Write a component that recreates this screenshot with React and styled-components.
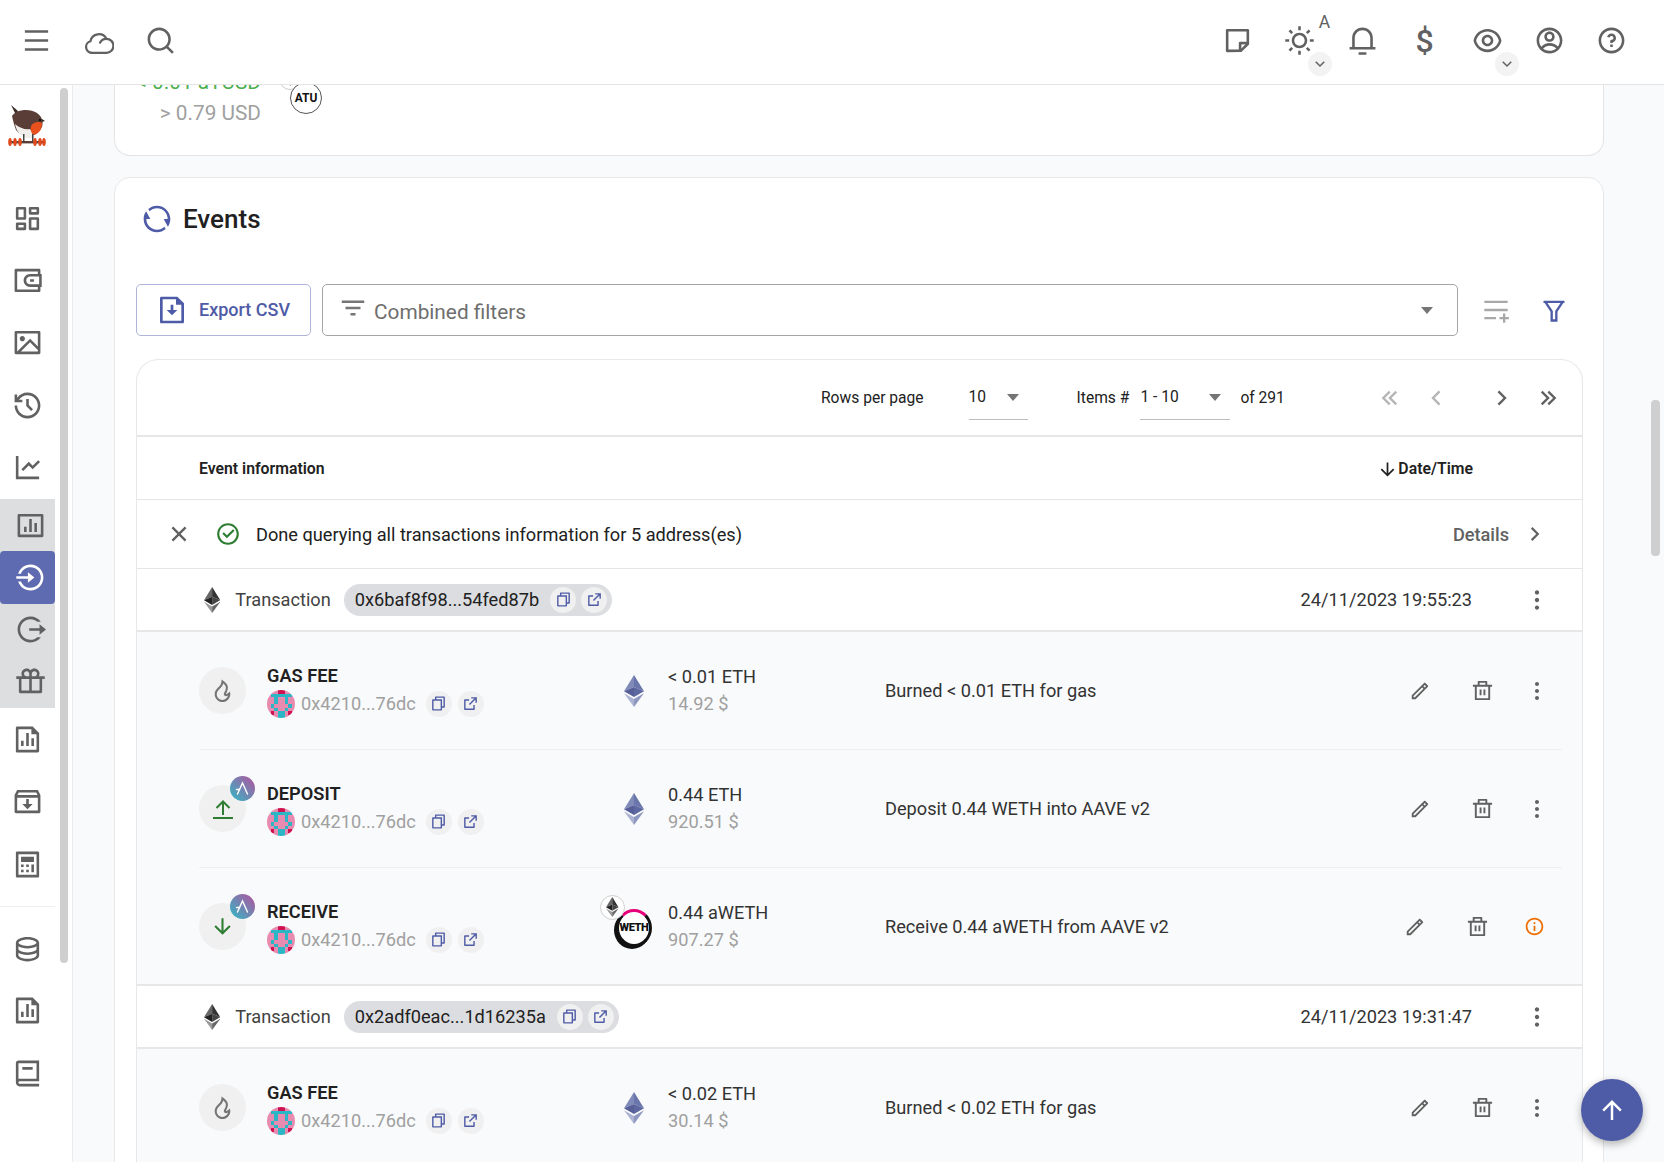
import React from "react";
import styled, { createGlobalStyle } from "styled-components";
import {
  RiMenuLine, RiSearchLine, RiStickyNoteLine, RiSunLine, RiNotification3Line, RiEyeLine,
  RiAccountCircleLine, RiQuestionLine, RiArrowDownSLine, RiDashboardLine, RiWallet3Line, RiImageLine,
  RiHistoryLine, RiLineChartLine, RiBarChartBoxLine, RiLoginCircleLine, RiLogoutCircleRLine, RiGiftLine,
  RiFileChartLine, RiInboxArchiveLine, RiCalculatorLine, RiDatabase2Line, RiBook2Line, RiRefreshLine,
  RiFileDownloadLine, RiFilter3Line, RiPlayListAddLine, RiFilterLine, RiArrowLeftDoubleLine,
  RiArrowRightDoubleLine, RiArrowLeftSLine, RiArrowRightSLine, RiArrowDownLine, RiArrowUpLine, RiCloseLine,
  RiCheckboxCircleLine, RiFileCopyLine, RiExternalLinkLine, RiFireLine, RiPencilLine, RiDeleteBinLine,
  RiMore2Fill, RiInformationLine,
} from "react-icons/ri";

const PRIMARY = "#4e5ba6";
const ICON = "#616161";

const GlobalStyle = createGlobalStyle`
  html, body { margin: 0; height: 100%; overflow: hidden; background: #fff; }
  body { font-family: Roboto, "Liberation Sans", sans-serif; color: #212121; }
  * { box-sizing: border-box; }
`;

const Page = styled.div`
  display: flex;
  flex-direction: column;
  height: 100vh;
`;

const TopBar = styled.header`
  position: relative;
  z-index: 2;
  flex: 0 0 85px;
  display: flex;
  align-items: center;
  justify-content: space-between;
  padding: 0 21px 2px 5px;
  background: #fff;
  border-bottom: 1px solid #e4e4e4;
`;

const BarGroup = styled.div`
  display: flex;
  align-items: center;
`;

const BarButton = styled.div`
  position: relative;
  width: 62.4px;
  height: 62.4px;
  display: flex;
  align-items: center;
  justify-content: center;
  color: ${ICON};
  font-size: 31px;
`;

const Currency = styled.span`
  font-size: 32px;
  font-weight: 500;
  color: ${ICON};
`;

const AutoMark = styled.span`
  position: absolute;
  top: 2px;
  left: 50px;
  font-size: 17.5px;
  color: ${ICON};
`;

const MenuChevron = styled.span`
  position: absolute;
  top: 42px;
  left: 39px;
  width: 24px;
  height: 24px;
  border-radius: 50%;
  background: #f3f3f3;
  display: flex;
  align-items: center;
  justify-content: center;
  font-size: 18px;
`;

const Body = styled.div`
  flex: 1;
  display: flex;
  min-height: 0;
`;

const Sidebar = styled.aside`
  position: relative;
  flex: 0 0 73px;
  padding-right: 17px;
  border-right: 1px solid #ececec;
  background: #fff;
`;

const SideScroll = styled.span`
  position: absolute;
  top: 3px;
  left: 60px;
  width: 8px;
  height: 875px;
  border-radius: 4px;
  background: #cfcfcf;
`;

const LogoBox = styled.div`
  height: 102px;
  padding: 19px 0 0 8px;
`;

const NavItem = styled.div`
  height: ${p => (p.$sub ? "52.3px" : "62.4px")};
  display: flex;
  align-items: center;
  justify-content: center;
  padding-left: ${p => (p.$sub ? "6px" : "0")};
  font-size: 31px;
  color: ${p => (p.$active ? "#fff" : ICON)};
  background: ${p => (p.$active ? "#5f6bb0" : "transparent")};
  border-radius: ${p => (p.$active ? "4px" : "0")};
`;

const NavGroup = styled.div`
  background: #dddee0;
`;

const NavDivider = styled.div`
  height: 1px;
  margin: 11px 0 10px;
  background: #eeeeee;
`;

const Main = styled.main`
  position: relative;
  flex: 1;
  min-width: 0;
  overflow: hidden;
  padding: 0 60px 0 41px;
  background: #f9fafb;
`;

const PageScroll = styled.span`
  position: absolute;
  top: 315px;
  right: 4px;
  width: 9px;
  height: 156px;
  border-radius: 4px;
  background: #cfcfcf;
`;

const BalanceCard = styled.section`
  display: flow-root;
  height: 71px;
  padding-left: 21px;
  background: #fff;
  border: 1px solid #e4e4e4;
  border-top: 0;
  border-radius: 0 0 16px 16px;
`;

const BalanceCell = styled.div`
  position: relative;
  width: 125px;
  margin-top: -18px;
  text-align: right;
  font-size: 20.8px;
  line-height: 30.5px;
`;

const Gain = styled.div`
  color: #4caf50;
`;

const Muted = styled.div`
  color: #a0a0a0;
`;

const AtuBadge = styled.span`
  position: absolute;
  top: 15px;
  left: 154px;
  width: 32px;
  height: 32px;
  border: 1px solid #555;
  border-radius: 50%;
  background: #fff;
  color: #111;
  font-size: 12px;
  font-weight: 700;
  line-height: 30px;
  text-align: center;
`;

const BehindBadge = styled.span`
  position: absolute;
  top: 1px;
  left: 143px;
  width: 22px;
  height: 22px;
  border: 1px solid #ccc;
  border-radius: 50%;
  background: #fff;
  display: flex;
  align-items: center;
  justify-content: center;
`;

const EventsCard = styled.section`
  margin-top: 21px;
  padding: 0 20px 0 21px;
  height: 1200px;
  background: #fff;
  border: 1px solid #e8e8e8;
  border-radius: 16px 16px 0 0;
`;

const TitleRow = styled.div`
  height: 84px;
  display: flex;
  align-items: center;
  gap: 10px;
  padding: 0 0 2px 5px;
  font-size: 26px;
  font-weight: 500;
  color: #212121;
  svg { color: ${PRIMARY}; font-size: 32px; }
`;

const FilterRow = styled.div`
  margin-top: 22px;
  display: flex;
  align-items: center;
  gap: 11px;
`;

const ExportButton = styled.div`
  flex: 0 0 175px;
  height: 52px;
  display: flex;
  align-items: center;
  padding: 0 0 1px 19px;
  gap: 11px;
  border: 1px solid #aeb5d8;
  border-radius: 5px;
  color: ${PRIMARY};
  font-size: 18px;
  font-weight: 500;
  svg { font-size: 32px; }
`;

const FilterSelect = styled.div`
  flex: 0 0 1136px;
  height: 52px;
  display: flex;
  align-items: center;
  padding: 0 24px 0 15px;
  gap: 6px;
  border: 1px solid #a5a5a5;
  border-radius: 5px;
  color: #6e6e6e;
  font-size: 20.8px;
  svg { font-size: 30px; color: #757575; margin-top: -4px; }
`;

const FilterLabel = styled.span`
  padding-top: 3px;
`;

const Caret = styled.span`
  display: block;
  width: 0;
  height: 0;
  margin-left: ${p => (p.$push ? "auto" : "0")};
  border-left: 6.5px solid transparent;
  border-right: 6.5px solid transparent;
  border-top: 7px solid #757575;
`;

const FilterTools = styled.div`
  display: flex;
  align-items: center;
  gap: 30px;
  padding-left: 13px;
  font-size: 28px;
  color: #a8a8a8;
  svg:last-child { color: ${PRIMARY}; }
`;

const TableCard = styled.div`
  margin-top: 23px;
  border: 1px solid #e8e8e8;
  border-bottom: 0;
  border-radius: 22px 22px 0 0;
  overflow: hidden;
`;

const Pagination = styled.div`
  height: 77px;
  display: flex;
  align-items: center;
  padding-left: 684px;
  font-size: 15.6px;
  white-space: nowrap;
  color: #212121;
  border-bottom: 2px solid #e6e6e6;
`;

const PageSelect = styled.div`
  flex: 0 0 ${p => p.$width}px;
  height: 44px;
  margin: ${p => p.$margin};
  padding-right: 9px;
  display: flex;
  align-items: center;
  justify-content: space-between;
  border-bottom: 1px solid #bdbdbd;
`;

const Pagers = styled.div`
  display: flex;
  align-items: center;
  margin-left: 82px;
  font-size: 28px;
  svg { display: block; }
`;

const Pager = styled.span`
  flex: 0 0 46px;
  margin-left: ${p => p.$gap || 0}px;
  display: flex;
  justify-content: center;
  color: ${p => (p.$off ? "#b5b5b5" : "#616161")};
`;

const HeadRow = styled.div`
  height: 63px;
  display: flex;
  align-items: center;
  justify-content: space-between;
  padding: 0 109px 0 62px;
  font-size: 15.8px;
  font-weight: 600;
  border-bottom: 1px solid #e6e6e6;
`;

const SortLabel = styled.div`
  display: flex;
  align-items: center;
  svg { font-size: 21px; margin-top: 2px; }
`;

const StatusRow = styled.div`
  height: 69px;
  display: flex;
  align-items: center;
  padding: 0 34px 0 28px;
  font-size: 18.2px;
  border-bottom: 1px solid #e6e6e6;
`;

const CloseIcon = styled(RiCloseLine)`
  font-size: 28px;
  color: ${ICON};
`;

const CheckIcon = styled(RiCheckboxCircleLine)`
  margin: 0 15px 0 22px;
  font-size: 26px;
  color: #2e7d32;
`;

const DetailsLink = styled.div`
  margin-left: auto;
  display: flex;
  align-items: center;
  gap: 13px;
  color: #616161;
  font-weight: 500;
  svg { font-size: 26px; }
`;

const TxRow = styled.div`
  height: 63px;
  display: flex;
  align-items: center;
  padding: 0 32px 0 67px;
  font-size: 18.2px;
  border-bottom: 2px solid #e6e7e9;
`;

const TxLabel = styled.span`
  margin: 0 13px 0 15px;
  color: #424242;
`;

const HashChip = styled.span`
  height: 32px;
  display: flex;
  align-items: center;
  gap: 5px;
  padding: 0 5px 0 11px;
  border-radius: 16px;
  background: #dcdde0;
  > span:first-child { margin-right: 6px; }
`;

const RoundAction = styled.span`
  width: 26px;
  height: 26px;
  border-radius: 50%;
  background: #f0f0f0;
  display: flex;
  align-items: center;
  justify-content: center;
  font-size: 17px;
  color: ${PRIMARY};
`;

const TxDate = styled.span`
  margin-left: auto;
  margin-right: 52px;
  color: #333;
`;

const MoreIcon = styled(RiMore2Fill)`
  font-size: 26px;
  color: ${ICON};
`;

const EventBlock = styled.div`
  padding: 0 20px 0 62px;
  background: #f9fafb;
  border-bottom: 2px solid ${p => (p.$closed ? "#e6e7e9" : "transparent")};
`;

const EventGrid = styled.div`
  height: ${p => (p.$last ? "116px" : "118px")};
  padding-top: ${p => (p.$last ? "2px" : "0")};
  display: grid;
  grid-template-columns: 68px 349px 52px 217px 1fr auto;
  align-items: center;
  border-bottom: 1px solid ${p => (p.$last ? "transparent" : "#eeeff1")};
`;

const TypeCircle = styled.div`
  position: relative;
  width: 47px;
  height: 47px;
  border-radius: 50%;
  background: #f0f0f0;
  display: flex;
  align-items: center;
  justify-content: center;
  font-size: 25px;
  color: ${p => p.$color};
`;

const AaveBadge = styled.span`
  position: absolute;
  top: -9px;
  left: 31px;
  width: 25px;
  height: 25px;
  border-radius: 50%;
  background: linear-gradient(225deg, #b6509e, #2ebac6);
  display: flex;
  align-items: center;
  justify-content: center;
`;

const EventName = styled.div`
  font-size: 18.2px;
  font-weight: 600;
  line-height: 24px;
  color: #212121;
`;

const AddressRow = styled.div`
  display: flex;
  align-items: center;
  margin-top: 2px;
  gap: 6px;
  font-size: 18.2px;
  color: #a0a0a0;
  > span:nth-of-type(2) { margin-right: 4px; }
`;

const AvatarWrap = styled.span`
  display: flex;
  width: 28px;
  height: 28px;
  border-radius: 50%;
  overflow: hidden;
`;

const AssetCell = styled.div`
  position: relative;
  width: 36px;
  height: 36px;
  display: flex;
  align-items: center;
  justify-content: center;
`;

const WethCoin = styled.span`
  width: 38px;
  height: 38px;
  margin-top: 2px;
  border-radius: 50%;
  border: 3px solid #111;
  border-top-color: #e6007a;
  background: #fff;
  color: #111;
  font-size: 11px;
  font-weight: 900;
  letter-spacing: -0.4px;
  display: flex;
  align-items: center;
  justify-content: center;
  box-shadow: -2px 2px 0 #111;
`;

const ChainBadge = styled.span`
  position: absolute;
  top: -14px;
  left: -16px;
  width: 25px;
  height: 25px;
  border-radius: 50%;
  border: 1px solid #cfcfcf;
  background: #fff;
  display: flex;
  align-items: center;
  justify-content: center;
`;

const Amount = styled.div`
  padding-bottom: 2px;
  font-size: 18.2px;
  line-height: 27px;
  color: #333;
`;

const Note = styled.div`
  font-size: 18.2px;
  color: #333;
`;

const RowActions = styled.div`
  display: flex;
  align-items: center;
  padding-right: ${p => (p.$warn ? "16px" : "13px")};
  color: ${ICON};
`;

const ActionIcon = styled.span`
  width: 24px;
  display: flex;
  justify-content: center;
  font-size: ${p => p.$size || 22}px;
  margin-right: ${p => p.$gap || 0}px;
  color: ${p => p.$color || ICON};
`;

const ScrollTop = styled.div`
  position: fixed;
  right: 21px;
  bottom: 21px;
  z-index: 3;
  width: 62px;
  height: 62px;
  border-radius: 50%;
  background: ${PRIMARY};
  color: #fff;
  font-size: 30px;
  display: flex;
  align-items: center;
  justify-content: center;
  box-shadow: 0 3px 8px rgba(0, 0, 0, 0.3);
`;

const EthLogo = ({ size = 32, dark }) => {
  const [a, b, c, d, e, f] = dark
    ? ["#666", "#333", "#222", "#444", "#9a9a9a", "#666"]
    : ["#7f8ab8", "#6a76ab", "#565f98", "#5d68a0", "#adb4d3", "#8d97c0"];
  return (
    <svg width={size * 0.625} height={size} viewBox="0 0 20 32">
      <polygon points="10,0 0,16.2 10,12" fill={a} />
      <polygon points="10,0 20,16.2 10,12" fill={b} />
      <polygon points="0,16.2 10,22 10,12" fill={c} />
      <polygon points="20,16.2 10,22 10,12" fill={d} />
      <polygon points="0,18.2 10,32 10,24" fill={e} />
      <polygon points="20,18.2 10,32 10,24" fill={f} />
    </svg>
  );
};

const CloudIcon = () => (
  <svg width="30" height="28" viewBox="0 0 28 26" fill="none" stroke="currentColor" strokeWidth="2.1" strokeLinecap="round">
    <path d="M7 24 A5.5 5.5 0 0 1 6 13.2 A8 8 0 0 1 21 11" />
    <path d="M15 14.5 A6.5 6.5 0 0 1 21 11 A6.5 6.5 0 0 1 21 24 H7" />
  </svg>
);

const BLOCKIE = ["pppr", "pttt", "pptp", "pptp", "ptpp", "pptp", "prpt", "pppt"];
const BLOCK_COLORS = { p: "#e88bb0", t: "#2bb6c6", r: "#cf1250" };

const Avatar = () => (
  <AvatarWrap>
    <svg width="28" height="28" viewBox="0 0 8 8" shapeRendering="crispEdges">
      {BLOCKIE.map((row, y) =>
        [...row, ...[...row].reverse()].map((c, x) => (
          <rect key={`${x}-${y}`} x={x} y={y} width="1.02" height="1.02" fill={BLOCK_COLORS[c]} />
        ))
      )}
    </svg>
  </AvatarWrap>
);

const Robin = () => (
  <svg width="38" height="44" viewBox="0 0 38 44">
    <path d="M3 1 L10 7 L8 11 Z" fill="#3b2a26" />
    <path d="M4 12 C8 5 22 4 29 9 C35 13 36 20 33 25 C28 34 14 34 8 26 C6 21 5 16 4 12 Z" fill="#5a3d36" />
    <path d="M7 20 C11 24 18 26 22 25 L27 33 C18 37 9 31 7 20 Z" fill="#efeeea" />
    <path d="M23 22 C25 18 31 17 34 19 C34 25 31 30 25 31 C23 28 22 25 23 22 Z" fill="#e8511d" />
    <circle cx="32" cy="16" r="1.2" fill="#111" />
    <path d="M34 15 L37 17 L34 18 Z" fill="#3b2a26" />
    <rect x="3" y="37" width="32" height="2.4" fill="#5a3d36" />
    <rect x="15" y="30" width="1.5" height="8" fill="#444" />
    <rect x="24" y="30" width="1.5" height="8" fill="#444" />
    {[2, 7, 12, 27, 32, 36].map(x => (
      <ellipse key={x} cx={x} cy="38" rx="1.8" ry="4" fill="#e04a1c" />
    ))}
  </svg>
);

const AaveMark = () => (
  <AaveBadge>
    <svg width="15" height="15" viewBox="0 0 15 15" fill="none" stroke="#fff" strokeWidth="1.4" strokeLinecap="round">
      <path d="M2.5 13 L7.5 2 L12.5 13" />
      <path d="M1.5 8.5 H4.5" />
    </svg>
  </AaveBadge>
);

const DepositArrow = () => (
  <svg width="24" height="24" viewBox="0 0 24 24" fill="none" stroke="currentColor" strokeWidth="2">
    <path d="M12 18 V5 M5.5 11 L12 4.5 L18.5 11 M2 21 H22" />
  </svg>
);

const Actions = ({ warn }) => (
  <RowActions $warn={warn}>
    <ActionIcon $gap={38}><RiPencilLine /></ActionIcon>
    <ActionIcon $gap={warn ? 33 : 31} $size={23}><RiDeleteBinLine /></ActionIcon>
    {warn ? (
      <ActionIcon $size={21} $color="#ef6c00"><RiInformationLine /></ActionIcon>
    ) : (
      <ActionIcon $size={26}><RiMore2Fill /></ActionIcon>
    )}
  </RowActions>
);

const LinkButtons = () => (
  <>
    <RoundAction><RiFileCopyLine /></RoundAction>
    <RoundAction><RiExternalLinkLine /></RoundAction>
  </>
);

const Tx = ({ hash, date }) => (
  <TxRow>
    <EthLogo size={26} dark />
    <TxLabel>Transaction</TxLabel>
    <HashChip>
      <span>{hash}</span>
      <LinkButtons />
    </HashChip>
    <TxDate>{date}</TxDate>
    <MoreIcon />
  </TxRow>
);

const EventRow = ({ name, icon, color, aave, weth, amount, value, note, warn, last }) => (
  <EventGrid $last={last}>
    <TypeCircle $color={color}>
      {icon}
      {aave && <AaveMark />}
    </TypeCircle>
    <div>
      <EventName>{name}</EventName>
      <AddressRow>
        <Avatar />
        <span>0x4210...76dc</span>
        <LinkButtons />
      </AddressRow>
    </div>
    <AssetCell>
      {weth ? (
        <>
          <WethCoin>WETH</WethCoin>
          <ChainBadge><EthLogo size={20} dark /></ChainBadge>
        </>
      ) : (
        <EthLogo />
      )}
    </AssetCell>
    <Amount>
      {amount}
      <Muted>{value}</Muted>
    </Amount>
    <Note>{note}</Note>
    <Actions warn={warn} />
  </EventGrid>
);

const NAV_TOP = [RiDashboardLine, RiWallet3Line, RiImageLine, RiHistoryLine, RiLineChartLine];
const NAV_GROUP = [RiBarChartBoxLine, RiLoginCircleLine, RiLogoutCircleRLine, RiGiftLine];
const NAV_MID = [RiFileChartLine, RiInboxArchiveLine, RiCalculatorLine];
const NAV_BOTTOM = [RiDatabase2Line, RiFileChartLine, RiBook2Line];

const App = () => (
  <Page>
    <GlobalStyle />
    <TopBar>
      <BarGroup>
        <BarButton><RiMenuLine /></BarButton>
        <BarButton><CloudIcon /></BarButton>
        <BarButton><RiSearchLine /></BarButton>
      </BarGroup>
      <BarGroup>
        <BarButton><RiStickyNoteLine /></BarButton>
        <BarButton>
          <RiSunLine />
          <AutoMark>A</AutoMark>
          <MenuChevron><RiArrowDownSLine /></MenuChevron>
        </BarButton>
        <BarButton><RiNotification3Line /></BarButton>
        <BarButton><Currency>$</Currency></BarButton>
        <BarButton>
          <RiEyeLine />
          <MenuChevron><RiArrowDownSLine /></MenuChevron>
        </BarButton>
        <BarButton><RiAccountCircleLine /></BarButton>
        <BarButton><RiQuestionLine /></BarButton>
      </BarGroup>
    </TopBar>
    <Body>
      <Sidebar>
        <SideScroll />
        <LogoBox><Robin /></LogoBox>
        {NAV_TOP.map((Icon, i) => <NavItem key={i}><Icon /></NavItem>)}
        <NavGroup>
          {NAV_GROUP.map((Icon, i) => <NavItem key={i} $sub $active={i === 1}><Icon /></NavItem>)}
        </NavGroup>
        {NAV_MID.map((Icon, i) => <NavItem key={i}><Icon /></NavItem>)}
        <NavDivider />
        {NAV_BOTTOM.map((Icon, i) => <NavItem key={i}><Icon /></NavItem>)}
      </Sidebar>
      <Main>
        <PageScroll />
        <BalanceCard>
          <BalanceCell>
            <Gain>&lt; 0.01 aTUSD</Gain>
            <Muted>&gt; 0.79 USD</Muted>
            <BehindBadge><EthLogo size={14} dark /></BehindBadge>
            <AtuBadge>ATU</AtuBadge>
          </BalanceCell>
        </BalanceCard>
        <EventsCard>
          <TitleRow><RiRefreshLine />Events</TitleRow>
          <FilterRow>
            <ExportButton><RiFileDownloadLine />Export CSV</ExportButton>
            <FilterSelect>
              <RiFilter3Line />
              <FilterLabel>Combined filters</FilterLabel>
              <Caret $push />
            </FilterSelect>
            <FilterTools>
              <RiPlayListAddLine />
              <RiFilterLine />
            </FilterTools>
          </FilterRow>
          <TableCard>
            <Pagination>
              Rows per page
              <PageSelect $width={59} $margin="0 49px 0 45px">10<Caret /></PageSelect>
              Items #
              <PageSelect $width={90} $margin="0 10px 0 11px">1 - 10<Caret /></PageSelect>
              of 291
              <Pagers>
                <Pager $off><RiArrowLeftDoubleLine /></Pager>
                <Pager $off><RiArrowLeftSLine /></Pager>
                <Pager $gap={20}><RiArrowRightSLine /></Pager>
                <Pager><RiArrowRightDoubleLine /></Pager>
              </Pagers>
            </Pagination>
            <HeadRow>
              <span>Event information</span>
              <SortLabel><RiArrowDownLine />Date/Time</SortLabel>
            </HeadRow>
            <StatusRow>
              <CloseIcon />
              <CheckIcon />
              Done querying all transactions information for 5 address(es)
              <DetailsLink>Details<RiArrowRightSLine /></DetailsLink>
            </StatusRow>
            <Tx hash="0x6baf8f98...54fed87b" date="24/11/2023 19:55:23" />
            <EventBlock $closed>
              <EventRow
                name="GAS FEE" icon={<RiFireLine />} color="#757575"
                amount="< 0.01 ETH" value="14.92 $" note="Burned < 0.01 ETH for gas"
              />
              <EventRow
                name="DEPOSIT" icon={<DepositArrow />} color="#2e7d32" aave
                amount="0.44 ETH" value="920.51 $" note="Deposit 0.44 WETH into AAVE v2"
              />
              <EventRow
                name="RECEIVE" icon={<RiArrowDownLine />} color="#2e7d32" aave weth warn last
                amount="0.44 aWETH" value="907.27 $" note="Receive 0.44 aWETH from AAVE v2"
              />
            </EventBlock>
            <Tx hash="0x2adf0eac...1d16235a" date="24/11/2023 19:31:47" />
            <EventBlock>
              <EventRow
                name="GAS FEE" icon={<RiFireLine />} color="#757575"
                amount="< 0.02 ETH" value="30.14 $" note="Burned < 0.02 ETH for gas"
              />
            </EventBlock>
          </TableCard>
        </EventsCard>
      </Main>
    </Body>
    <ScrollTop><RiArrowUpLine /></ScrollTop>
  </Page>
);

export default App;
